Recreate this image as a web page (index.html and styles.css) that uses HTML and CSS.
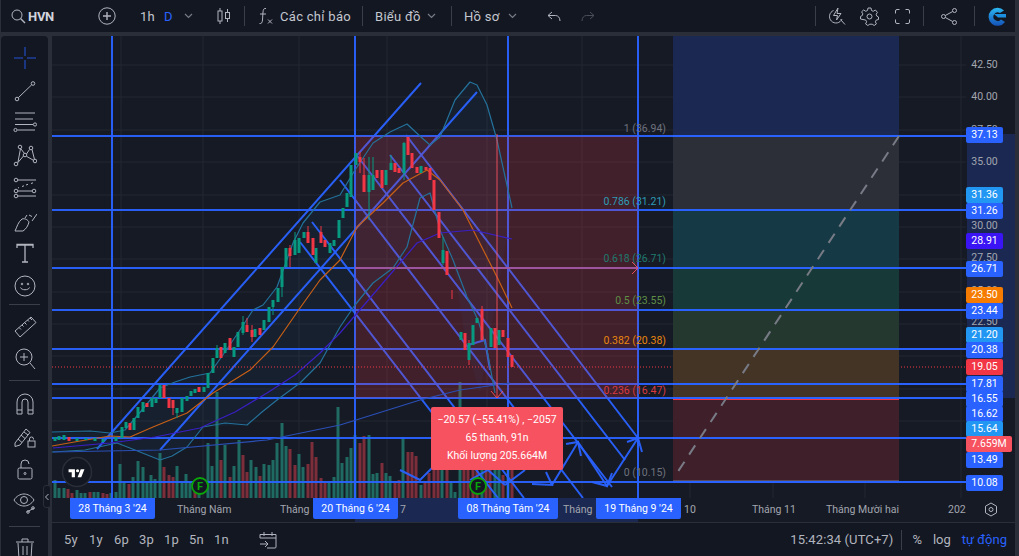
FILE: index.html
```html
<!DOCTYPE html>
<html lang="vi">
<head>
<meta charset="utf-8">
<title>HVN</title>
<link rel="stylesheet" href="styles.css">
</head>
<body>
<div class="app">
  <header class="topbar">
    <div class="symbol">
      <svg class="ico" width="16" height="16" viewBox="0 0 16 16"><circle cx="7" cy="7" r="5"/><path d="M10.5 10.5 15 15" class="thick"/></svg>
      <span class="sym-name">HVN</span>
    </div>
    <svg class="ico plus" width="18" height="18" viewBox="0 0 18 18"><circle cx="9" cy="9" r="8.2"/><path d="M9 5v8M5 9h8" class="thick"/></svg>
    <span class="tb-text tf">1h</span>
    <span class="tb-text tf-d">D</span>
    <svg class="chev chev-tf" width="9" height="6" viewBox="0 0 9 6"><path d="M1 1l3.5 3.500L8 1"/></svg>
    <svg class="ico candles" width="14" height="16" viewBox="0 0 14 16"><path d="M3 0v3M3 13v3M10.500 1v3M10.500 11v3"/><rect x="1" y="3" width="4" height="10"/><rect x="8.500" y="4.500" width="4" height="6"/></svg>
    <i class="sep sep-a"></i>
    <svg class="ico fx" width="14" height="18" viewBox="0 0 14 18"><path d="M7 1.500C5 1 4.200 2.500 4 5L3.500 13C3.300 15.500 2.500 17 .5 16.500M1 7h6M9 12.500l4 4M13 12.500l-4 4"/></svg>
    <span class="tb-text ind">Các chỉ báo</span>
    <i class="sep sep-b"></i>
    <span class="tb-text chart-menu">Biểu đồ</span>
    <svg class="chev chev-b" width="9" height="6" viewBox="0 0 9 6"><path d="M1 1l3.500 3.500L8 1"/></svg>
    <i class="sep sep-c"></i>
    <span class="tb-text profile">Hồ sơ</span>
    <svg class="chev chev-c" width="9" height="6" viewBox="0 0 9 6"><path d="M1 1l3.500 3.500L8 1"/></svg>
    <svg class="ico undo" width="14" height="11" viewBox="0 0 14 11"><path d="M5 1 1 4.500 5 8M1 4.500h7.500c2.500 0 4.500 2 4.500 5.500"/></svg>
    <svg class="ico redo" width="14" height="11" viewBox="0 0 14 11"><path d="M9 1l4 3.500L9 8M13 4.500H5.500C3 4.500 1 6.500 1 10"/></svg>
    <div class="top-right">
      <i class="sep"></i>
      <svg class="ico bolt" width="18" height="19" viewBox="0 0 18 19"><path d="M5.500 3.500a6.500 6.500 0 1 0 8.500 8.500M12.500 12.500l4.500 5M10 1 5.500 8.500H9.500L8.500 13l4.500-6.500H9z"/></svg>
      <svg class="ico gear" width="19" height="19" viewBox="0 0 19 19"><circle cx="9.500" cy="9.500" r="2.500"/><path d="M8 1h3l.5 2.500 1.700.8L15.400 3l2 2.300-1.200 2 .5 1.700 1.800 1v2.500l-2.300.6-.8 1.700 1 2.100-2.200 1.600-2-1.300h-2.400l-2 1.300-2.200-1.600 1-2.100-.8-1.700L.5 12V9.500l1.800-1 .5-1.700-1.200-2L3.600 3l2.200 1.300 1.700-.8z"/></svg>
      <svg class="ico full" width="15" height="15" viewBox="0 0 15 15"><path d="M.5 4.500V2A1.500 1.500 0 0 1 2 .5h2.500M10.500.5H13A1.500 1.500 0 0 1 14.500 2v2.500M14.500 10.500V13a1.500 1.500 0 0 1-1.500 1.500h-2.500M4.500 14.500H2A1.500 1.500 0 0 1 .5 13v-2.500"/></svg>
      <i class="sep"></i>
      <svg class="ico share" width="16" height="17" viewBox="0 0 16 17"><circle cx="13.500" cy="2.500" r="2"/><circle cx="2.500" cy="8.500" r="2"/><circle cx="13.500" cy="14.500" r="2"/><path d="M11.700 3.500 4.300 7.500M4.300 9.500l7.400 4"/></svg>
      <i class="sep"></i>
      <svg class="logo" width="19" height="20" viewBox="0 0 19 20">
        <defs><linearGradient id="lg" x1="0" y1="0" x2="0" y2="1"><stop offset="0" stop-color="#2bb8f2"/><stop offset="1" stop-color="#1452b8"/></linearGradient></defs>
        <path d="M17 4.500A9 9 0 1 0 18 16L14 13.500A4.300 4.300 0 1 1 13 7z" fill="url(#lg)"/>
        <path d="M7 8h12v3.500H11z" fill="#1b8fe0"/>
      </svg>
    </div>
  </header>

  <div class="main">
    <aside class="sidebar">
      <div class="tool-group">
        <div class="tool"><svg class="tool-ico cross" width="24" height="24" viewBox="0 0 24 24"><path d="M12 1v9M12 14v9M1 12h9M14 12h9"/></svg></div>
        <div class="tool"><svg class="tool-ico" width="24" height="24" viewBox="0 0 24 24"><circle cx="20" cy="4.500" r="1.800"/><circle cx="4" cy="20" r="1.800"/><path d="M18.700 5.800 5.300 18.700"/></svg></div>
        <div class="tool"><svg class="tool-ico" width="24" height="24" viewBox="0 0 24 24"><path d="M2 2h20M2 8h18M2 13.500h18M4.500 19H22"/><circle cx="22" cy="13.500" r="1.600"/><circle cx="2.500" cy="19" r="1.600"/></svg></div>
        <div class="tool"><svg class="tool-ico" width="24" height="24" viewBox="0 0 24 24"><circle cx="7" cy="3" r="1.800"/><circle cx="18" cy="4" r="1.800"/><circle cx="3" cy="20" r="1.800"/><circle cx="22" cy="17" r="1.800"/><circle cx="12" cy="11" r="1.800"/><path d="M8 5l3.500 4.500M7.500 4.500 5 18M16.500 5.500 13.500 10M19 5.500 21.500 15.500M13.500 12.300l7 4M10.500 12 4.500 19"/></svg></div>
        <div class="tool"><svg class="tool-ico" width="24" height="24" viewBox="0 0 24 24"><circle cx="3" cy="4" r="1.800"/><circle cx="3" cy="15" r="1.800"/><circle cx="3" cy="20" r="1.800"/><circle cx="21" cy="15" r="1.800"/><path d="M5 4h18M5 15h14M5 20h18M5 12l1-.5M9 10.500l2-.7M13 9l2-.7M18 7.500l2-.7" /></svg></div>
        <div class="tool"><svg class="tool-ico" width="24" height="24" viewBox="0 0 24 24"><path d="M2 22c2-4 3-9 7-12 3-1 6 1 7 3-1 4-3 7-6 9zM12 9l2-3M19 12l5-7M16 6l3 1.500"/></svg></div>
        <div class="tool"><svg class="tool-ico" width="24" height="24" viewBox="0 0 24 24"><path d="M4 7V3.500h16V7M12 3.500V21M9 21h6M4 4h16" class="fat"/></svg></div>
        <div class="tool"><svg class="tool-ico" width="24" height="24" viewBox="0 0 24 24"><circle cx="12" cy="12" r="10"/><path d="M7.500 13.500c1 3 8 3 9 0"/><circle cx="9" cy="10" r=".8"/><circle cx="15" cy="10" r=".8"/></svg></div>
      </div>
      <i class="tool-sep"></i>
      <div class="tool-group">
        <div class="tool"><svg class="tool-ico" width="24" height="24" viewBox="0 0 24 24"><path d="M2 17 18 3l5 5.500L7 23zM6 13.500l2 2M9 11l1.500 1.500M11.500 8.500l2 2M14.500 6l1.500 1.500M17 4l2 2"/></svg></div>
        <div class="tool"><svg class="tool-ico" width="24" height="24" viewBox="0 0 24 24"><circle cx="11" cy="10" r="8"/><path d="M11 6v8M7 10h8M17 16l5 6" /></svg></div>
      </div>
      <i class="tool-sep sep-2"></i>
      <div class="tool-group">
        <div class="tool"><svg class="tool-ico" width="24" height="24" viewBox="0 0 24 24"><path d="M4 22V10a8 8 0 0 1 16 0v12h-5V10a3 3 0 0 0-6 0v12zM4 18h5M15 18h5"/></svg></div>
        <div class="tool"><svg class="tool-ico" width="24" height="24" viewBox="0 0 24 24"><path d="M2 18 13 4l4 3.500L7 20l-5 1.500zM5 14l4 3.500M8 10l4 3.500M11 7l4 3"/><rect x="15" y="16" width="7" height="6"/><path d="M16.500 16v-2a2 2 0 0 1 4 0v.5"/></svg></div>
        <div class="tool"><svg class="tool-ico" width="24" height="24" viewBox="0 0 24 24"><rect x="5" y="11" width="14" height="11" rx="1.500"/><path d="M8 11V7a4 4 0 0 1 8 0"/><circle cx="12" cy="16.500" r="1"/></svg></div>
        <div class="tool"><svg class="tool-ico" width="24" height="24" viewBox="0 0 24 24"><path d="M1 10c5-8 15-8 20 0-5 8-15 8-20 0z"/><circle cx="11" cy="10" r="3.500"/><path d="M14 22l7-4"/><circle cx="15" cy="22" r="1.300"/><circle cx="20" cy="18" r="1.300"/></svg></div>
      </div>
      <i class="tool-sep sep-3"></i>
      <div class="tool"><svg class="tool-ico" width="24" height="24" viewBox="0 0 24 24"><path d="M5 7l1 16h12l1-16M3 6h18M9 6V3h6v3M10 10v9M14 10v9"/></svg></div>
    </aside>

    <div class="workspace">
      <section class="pane">
        <div class="chart-row">
          <div class="plot">
            <svg class="chart" width="914" height="462" viewBox="52 36 914 462">
              <path class="grid" d="M52 65H966M52 97H966M52 130H966M52 162H966M52 195H966M52 227H966M52 259H966M52 292H966M52 324H966M52 356H966M52 389H966M52 421H966M121 36V498M203 36V498M299 36V498M387 36V498M487 36V498M582 36V498M690 36V498M773 36V498M865 36V498M961 36V498"/>

              <path class="vol-up" d="M55 498V480M59 498V488M64 498V488M77 498V490M81 498V493M85 498V493M94 498V492M98 498V492M111 498V493M116 498V492M120 498V464M124 498V483M133 498V477M138 498V461M143 498V467M147 498V482M151 498V475M155 498V479M160 498V453M177 498V466M182 498V482M186 498V474M190 498V482M199 498V485M208 498V443M212 498V466M217 498V392M225 498V445M234 498V466M239 498V440M251 498V460M256 498V467M264 498V464M269 498V465M273 498V460M277 498V443M282 498V423M286 498V446M299 498V454M303 498V467M329 498V482M334 498V477M338 498V407M342 498V463M347 498V457M351 498V448M355 498V435M369 498V435M373 498V474M377 498V473M386 498V473M390 498V476M403 498V437M421 498V485M442 498V470M451 498V482M455 498V492M460 498V382M482 498V470M495 498V470M499 498V470M508 498V470"/>
              <path class="vol-down" d="M68 498V489M72 498V493M90 498V492M103 498V493M107 498V494M129 498V484M164 498V467M169 498V475M173 498V477M195 498V480M221 498V460M230 498V477M243 498V455M247 498V472M260 498V476M290 498V449M295 498V465M308 498V464M312 498V442M316 498V457M321 498V478M325 498V483M360 498V443M364 498V436M382 498V463M395 498V481M399 498V480M408 498V452M412 498V452M416 498V456M425 498V482M429 498V473M434 498V470M438 498V470M447 498V470M464 498V470M468 498V470M473 498V470M477 498V470M486 498V470M490 498V470M503 498V475M512 498V470"/>

              <path class="bb-fill" d="M52 432 110 433 125 430 160 388 190 377 210 373 240 330 253 310 263 305 277 287 293 243 303 223 320 202 340 195 355 170 373 143 390 132 407 124 430 145 440 137 455 100 470 82 477 85 487 105 497 140 512 208 480 393 467 350 453 260 440 230 430 193 420 198 407 247 393 268 373 283 340 327 320 363 300 383 277 400 247 425 203 427 187 447 160 460 117 443 52 452z"/>

              <g class="channels">
                <path d="M112 36V498M355 36V498M508 36V498M638 36V498"/>
                <path d="M52 136H966M52 210H966M52 268H966M52 310H966M52 349H966M52 384H966M52 398H966M52 438H966M52 482H966"/>
                <path d="M97 449 421 83M160 450 477 92"/>
                <path d="M300 242 498 498M312 222 524 498M340 180 583 498M355 153 612 487M390 155 625 460M406 135 638 438"/>
                <path d="M552 485 578 442 607 486 638 438"/>
                <path d="M532 484 552 485 546 472M566 444 578 442 581 456M592 482 607 486 612 473M627 442 638 438 642 452"/>
                <path d="M468 345 485 340 490 370M400 470 420 480 432 468M470 480 488 470 505 485M505 485 525 470"/>
              </g>

              <rect class="measure" x="355" y="136" width="283" height="262"/>

              <g class="ind">
                <polyline class="bb" points="52,432 90,431 110,433 125,430 142,410 160,388 175,382 190,377 210,373 225,352 240,330 253,310 263,305 277,287 293,243 303,223 320,202 340,195 355,170 373,143 390,132 407,124 421,137 430,145 440,137 455,100 470,82 477,85 487,105 497,140 512,208"/>
                <polyline class="bb" points="52,452 85,450 117,443 135,450 160,460 172,456 187,447 203,427 225,423 247,425 262,412 277,400 300,383 320,363 340,327 355,305 373,283 393,268 407,247 420,198 430,193 440,230 453,260 467,297 478,320 487,350 495,393"/>
                <polyline class="ma-o" points="52,446 80,441 110,436 130,437 153,427 187,413 213,393 250,370 273,347 300,308 320,280 340,260 357,227 383,203 403,183 427,170 440,180 463,210 497,277 512,308"/>
                <polyline class="ma-p" points="53,448 110,443 155,437 200,428 235,412 267,393 295,375 320,353 340,333 383,283 417,243 440,233 473,230 512,239"/>
                <polyline class="ma-b" points="53,452 160,450 267,440 340,425 420,400 460,390 510,383"/>
              </g>

              <path class="wick-up" d="M243 316V335M177 408V418M273 300V315M282 267V297M295 232V255M369 157V220M373 157V190M391 155V170M404 142V180M443 237V265M217 345V358"/>
              <path class="wick-down" d="M173 400V415M247 318V332M252 325V342M290 245V267M308 226V243M321 226V243M360 152V173M364 158V192M452 290V299M482 306V340M469 340V365"/>
              <path class="body-up" d="M55 437V441M59 436V440M64 435V440M77 438V441M86 438V440M95 438V441M103 439V442M116 437V441M122 427V438M126 422V428M134 418V430M138 407V418M143 402V412M152 398V407M156 398V403M160 385V398M177 408V413M182 398V412M187 396V401M191 391V396M195 389V393M204 387V392M208 373V388M213 358V373M217 348V358M225 343V353M234 347V357M238 332V347M243 322V333M255 329V337M264 320V330M269 307V322M273 300V307M278 288V302M282 267V287M286 248V267M295 240V255M299 238V253M304 232V238M316 248V263M330 243V253M334 240V246M339 220V238M343 208V218M347 193V207M351 165V197M356 153V165M369 175V192M373 175V190M386 170V185M391 163V170M404 143V173M421 166V173M443 250V263M461 332V340M469 343V360M473 325V345M477 318V323M491 328V347M499 330V345"/>
              <path class="body-down" d="M69 437V441M130 423V430M147 403V407M164 385V398M169 398V408M173 400V408M199 387V392M221 347V358M230 338V350M247 325V332M252 330V337M260 328V335M290 248V256M308 232V243M313 238V255M321 232V243M325 240V247M360 157V162M364 175V192M377 170V178M382 170V188M395 163V172M399 168V173M408 137V155M412 153V168M417 167V173M426 167V170M430 168V180M434 180V210M439 212V238M447 251V275M465 333V350M482 309V340M495 328V348M503 330V337M508 338V357M512 355V367"/>

              <path class="last-line" d="M52 367H966"/>
              <path class="measure-line" d="M497 134V398M355 268H638M491 391 497 398 503 391M632 262 638 268 632 274"/>

              <g class="position">
                <rect class="p-blue" x="673" y="36" width="226" height="100"/>
                <rect class="p-gray" x="673" y="136" width="226" height="74"/>
                <rect class="p-teal" x="673" y="210" width="226" height="58"/>
                <rect class="p-green" x="673" y="268" width="226" height="41"/>
                <rect class="p-olive" x="673" y="309" width="226" height="40"/>
                <rect class="p-orange" x="673" y="349" width="226" height="49"/>
                <rect class="p-red" x="673" y="398" width="226" height="83"/>
                <path class="p-edge-red" d="M673 399.500H899"/>
                <path class="p-edge-gray" d="M673 481H899"/>
              </g>
              <path class="p-lines" d="M673 136H966M673 210H966M673 268H966M673 310H966M673 349H966M673 384H966M673 398H966M673 438H966M673 482H966"/>
              <path class="trend" d="M899 136 677 473"/>

              <text class="fib f-gray" x="666" y="132">1 (36.94)</text>
              <text class="fib f-cyan" x="666" y="205">0.786 (31.21)</text>
              <text class="fib f-teal" x="666" y="262">0.618 (26.71)</text>
              <text class="fib f-green" x="666" y="304">0.5 (23.55)</text>
              <text class="fib f-orange" x="666" y="344">0.382 (20.38)</text>
              <text class="fib f-red" x="666" y="394">0.236 (16.47)</text>
              <text class="fib f-gray" x="666" y="476">0 (10.15)</text>

              <circle class="tv-circle" cx="77" cy="472" r="14.500"/>
              <path class="tv-logo" transform="translate(67.500 466) scale(.53)" d="M14 6H2v6h6v9h6V6zm12 15h-7l6-15h7l-6 15zm-7-9a3 3 0 1 0 0-6 3 3 0 0 0 0 6z"/>

              <circle class="flag" cx="200" cy="486" r="8"/>
              <text class="flag-t" x="200" y="490">F</text>
              <circle class="flag" cx="478" cy="486" r="8"/>
              <text class="flag-t" x="478" y="490">F</text>
            </svg>
            <div class="tooltip">
              <div>−20.57 (−55.41%) , −2057</div>
              <div>65 thanh, 91n</div>
              <div>Khối lượng 205.664M</div>
            </div>
            <div class="collapse"><svg width="6" height="8" viewBox="0 0 6 8"><path d="M4.500 1 1.500 4l3 3"/></svg></div>
          </div>
          <div class="price-axis">
            <div class="axis-hl"></div>
            <span class="tick" style="top:65px">42.50</span>
            <span class="tick" style="top:97px">40.00</span>
            <span class="tick" style="top:130px">37.50</span>
            <span class="tick" style="top:162px">35.00</span>
            <span class="tick" style="top:226px">30.00</span>
            <span class="tick" style="top:258px">27.50</span>
            <span class="tick" style="top:291px">25.00</span>
            <span class="tick" style="top:322px">22.50</span>
            <span class="plabel blue" style="top:135px">37.13</span>
            <span class="plabel sky" style="top:195px">31.36</span>
            <span class="plabel blue" style="top:210.500px">31.26</span>
            <span class="plabel indigo" style="top:240.500px">28.91</span>
            <span class="plabel blue" style="top:268.500px">26.71</span>
            <span class="plabel orange" style="top:295px">23.50</span>
            <span class="plabel blue" style="top:310.500px">23.44</span>
            <span class="plabel sky" style="top:334.500px">21.20</span>
            <span class="plabel blue" style="top:350px">20.38</span>
            <span class="plabel red" style="top:366.500px">19.05</span>
            <span class="plabel blue" style="top:383.500px">17.81</span>
            <span class="plabel blue" style="top:398.500px">16.55</span>
            <span class="plabel blue" style="top:413.500px">16.62</span>
            <span class="plabel sky" style="top:428.500px">15.64</span>
            <span class="plabel coral" style="top:443.500px">7.659M</span>
            <span class="plabel blue" style="top:459.500px">13.49</span>
            <span class="plabel blue" style="top:482.500px">10.08</span>
          </div>
        </div>
        <div class="time-axis">
          <div class="time-hl"></div>
          <span class="tlabel" style="left:125px">Tháng Năm</span>
          <span class="tlabel" style="left:228px">Tháng</span>
          <span class="tlabel" style="left:348px">7</span>
          <span class="tlabel" style="left:511px">Tháng</span>
          <span class="tlabel" style="left:632px">10</span>
          <span class="tlabel" style="left:700px">Tháng 11</span>
          <span class="tlabel" style="left:774px">Tháng Mười hai</span>
          <span class="tlabel" style="left:896px">202</span>
          <span class="tbox" style="left:18px">28 Tháng 3 '24</span>
          <span class="tbox" style="left:261px">20 Tháng 6 '24</span>
          <span class="tbox wide" style="left:406px">08 Tháng Tám '24</span>
          <span class="tbox" style="left:544px">19 Tháng 9 '24</span>
          <svg class="ico axis-gear" width="14" height="15" viewBox="0 0 14 15"><path d="M7 1l5.500 3.200v6.600L7 14l-5.500-3.200V4.200z"/><circle cx="7" cy="7.500" r="2"/></svg>
        </div>
      </section>
      <footer class="bottombar">
        <nav class="ranges"><span>5y</span><span>1y</span><span>6p</span><span>3p</span><span>1p</span><span>5n</span><span>1n</span></nav>
        <svg class="ico cal" width="18" height="18" viewBox="0 0 18 18"><path d="M1 7V3.500h16V16a1 1 0 0 1-1 1H8M5 1v4M13 1v4M1 7h16M1 13h8M6 10l3 3-3 3"/></svg>
        <div class="bb-right">
          <span class="clock">15:42:34 (UTC+7)</span>
          <i class="sep"></i>
          <span class="pct">%</span>
          <span class="logscale">log</span>
          <span class="auto">tự động</span>
        </div>
      </footer>
    </div>
  </div>
</div>
</body>
</html>
```
FILE: styles.css
```css
* { box-sizing: border-box; }
html, body { margin: 0; height: 100%; background: #2a2e39; overflow: hidden; }
body { font-family: Roboto, "Liberation Sans", sans-serif; color: #d1d4dc; }
.app { width: 1019px; height: 556px; display: flex; flex-direction: column; padding: 0 4px 0 1px; }

.topbar { height: 32px; flex: none; background: #131722; display: flex; align-items: center; margin-bottom: 4px; position: relative; }
.ico { fill: none; stroke: #b2b5be; stroke-width: 1; flex: none; }
.ico .thick { stroke-width: 1.400; }
.chev { fill: none; stroke: #787b86; stroke-width: 1.200; flex: none; }
.sep { display: block; width: 1px; height: 20px; background: #3a3e49; flex: none; }
.tb-text { font-size: 13px; letter-spacing: .3px; color: #c4c7cf; white-space: nowrap; flex: none; }
.symbol { display: flex; align-items: center; gap: 2px; margin-left: 9px; width: 52px; flex: none; }
.sym-name { font-size: 13px; font-weight: 700; letter-spacing: -.3px; color: #d1d4dc; }
.plus { margin-left: 36px; }
.tf { margin-left: 24px; width: 16px; }
.tf-d { margin-left: 8px; color: #2962ff; width: 12px; }
.chev-tf { margin-left: 8px; }
.candles { margin-left: 24px; }
.sep-a { margin-left: 13px; }
.fx { margin-left: 14px; }
.ind { margin-left: 7px; width: 70px; }
.sep-b { margin-left: 12px; }
.chart-menu { margin-left: 12px; width: 45px; }
.chev-b { margin-left: 7px; }
.sep-c { margin-left: 15px; }
.profile { margin-left: 12px; width: 36px; }
.chev-c { margin-left: 8px; }
.undo { margin-left: 30px; }
.redo { margin-left: 20px; opacity: .35; }
.top-right { margin-left: auto; display: flex; align-items: center; }
.bolt { margin-left: 12px; }
.gear { margin-left: 14px; }
.full { margin-left: 16px; margin-right: 13px; }
.share { margin-left: 17px; margin-right: 17px; }
.logo { margin-left: 12px; margin-right: 9px; }

.main { flex: 1; display: flex; gap: 4px; min-height: 0; }
.sidebar { width: 47px; flex: none; background: #131722; border-radius: 4px 4px 0 0; padding-top: 6px; display: flex; flex-direction: column; align-items: stretch; }
.tool-group { display: flex; flex-direction: column; }
.tool { height: 32.500px; display: flex; align-items: center; justify-content: center; flex: none; }
.tool-ico { fill: none; stroke: #b2b5be; stroke-width: 1; }
.tool-ico .fat { stroke-width: 1.300; }
.cross { stroke: #1f3f9a; stroke-width: 1.600; }
.tool-sep { display: block; height: 1px; background: #3a3e49; margin: 2px 8px 5px 8px; flex: none; }
.sep-2 { margin-top: 5px; margin-bottom: 7px; }
.sep-3 { margin-top: 8px; margin-bottom: 5px; }

.workspace { flex: 1; display: flex; flex-direction: column; min-width: 0; }
.pane { flex: none; height: 487px; background: #161a25; display: flex; flex-direction: column; border-bottom: 1px solid #2a2e39; }
.chart-row { height: 462px; flex: none; display: flex; }
.plot { width: 914px; height: 462px; position: relative; flex: none; }
.chart { display: block; }
.grid { stroke: #232733; stroke-width: 1; fill: none; }
.vol-up, .vol-down { fill: none; stroke-width: 3; }
.vol-up { stroke: #1f6a62; }
.vol-down { stroke: #7c2f3b; }
.bb-fill { fill: #2196f3; fill-opacity: .05; }
.channels path { fill: none; stroke: #2962ff; stroke-width: 2; stroke-opacity: .95; }
.measure { fill: #f23645; fill-opacity: .2; }
.ind polyline { fill: none; stroke-width: 1.200; stroke-linejoin: round; }
.bb { stroke: #24719a; }
.ma-o { stroke: #c75f16; }
.ma-p { stroke: #3a1fc4; }
.ma-b { stroke: #2a4fb5; }
.wick-up, .body-up { fill: none; stroke: #089981; }
.wick-down, .body-down { fill: none; stroke: #f23645; }
.wick-up, .wick-down { stroke-width: 1; }
.body-up, .body-down { stroke-width: 3; }
.last-line { stroke: #f23645; stroke-width: 1; stroke-dasharray: 1 2; fill: none; }
.measure-line { fill: none; stroke: #f7525f; stroke-width: 1; stroke-opacity: .9; }
.p-blue { fill: #1b2952; }
.p-gray { fill: #2d2f38; }
.p-teal { fill: #153a45; }
.p-green { fill: #173a38; }
.p-olive { fill: #24382f; }
.p-orange { fill: #443426; }
.p-red { fill: #3f1f2a; }
.p-edge-red { stroke: #f23645; stroke-width: 1; fill: none; }
.p-edge-gray { stroke: #787b86; stroke-width: 1; fill: none; }
.p-lines { stroke: #2962ff; stroke-width: 2; fill: none; }
.trend { stroke: #787b86; stroke-width: 2; stroke-dasharray: 11 8.500; fill: none; }
.fib { font-size: 10.500px; text-anchor: end; }
.f-gray { fill: #6f727d; }
.f-cyan { fill: #2e9cb5; }
.f-teal { fill: #1f7a6e; }
.f-green { fill: #5f8f45; }
.f-orange { fill: #e8860f; }
.f-red { fill: #d93a40; }
.tv-circle { fill: #131722; stroke: #2a2e39; stroke-width: 1.500; }
.tv-logo { fill: #fff; }
.flag { fill: #131722; stroke: #0aa50a; stroke-width: 1.800; }
.flag-t { fill: #0aa50a; font-size: 11px; font-weight: 700; text-anchor: middle; }

.tooltip { position: absolute; left: 379px; top: 371px; width: 132px; height: 63px; background: #f7525f; border-radius: 2px; color: #fff; font-size: 10.500px; text-align: center; display: flex; flex-direction: column; justify-content: center; gap: 3.500px; line-height: 14.500px; }
.collapse { position: absolute; left: -9px; top: 449px; width: 8px; height: 23px; background: #131722; border: 1px solid #2a2e39; border-radius: 3px; display: flex; align-items: center; justify-content: center; }
.collapse svg { fill: none; stroke: #b2b5be; stroke-width: 1; flex: none; }

.price-axis { width: 49px; flex: none; position: relative; height: 462px; }
.axis-hl { position: absolute; left: 1px; right: 0; top: 98px; height: 264px; background: #1b2952; }
.tick { position: absolute; left: 0; width: 37px; text-align: center; font-size: 10.500px; color: #a3a6af; line-height: 14px; transform: translateY(-43px); }
.plabel { position: absolute; left: 0; width: 37px; height: 16px; text-align: center; font-size: 10.500px; line-height: 16px; color: #fff; border-radius: 2px; transform: translateY(-44px); }
.blue { background: #2962ff; }
.sky { background: #2196f3; }
.indigo { background: #3a14f5; }
.orange { background: #f57c00; }
.red { background: #f23645; }
.coral { background: #f7525f; width: 46px; }

.time-axis { height: 24px; position: relative; flex: none; font-size: 10.500px; }
.time-hl { position: absolute; left: 303px; width: 283px; top: 0; bottom: 0; background: #1b2952; }
.tlabel { position: absolute; top: 5px; line-height: 14px; color: #a3a6af; white-space: nowrap; }
.tbox { position: absolute; top: 0; height: 21px; width: 85px; background: #2962ff; color: #fff; border-radius: 0 0 2px 2px; text-align: center; line-height: 22px; white-space: nowrap; }
.wide { width: 100px; }
.axis-gear { position: absolute; left: 932px; top: 4px; }

.bottombar { flex: 1; background: #131722; display: flex; align-items: center; font-size: 13px; color: #b2b5be; }
.ranges { display: flex; margin-left: 12px; }
.ranges span { width: 25px; text-align: left; letter-spacing: .3px; }
.cal { margin-left: 20px; }
.bb-right { margin-left: auto; display: flex; align-items: center; }
.clock { margin-right: 8px; letter-spacing: .1px; }
.pct { margin-left: 10px; }
.logscale { margin-left: 11px; }
.auto { margin-left: 11px; margin-right: 8px; color: #2962ff; }
```
